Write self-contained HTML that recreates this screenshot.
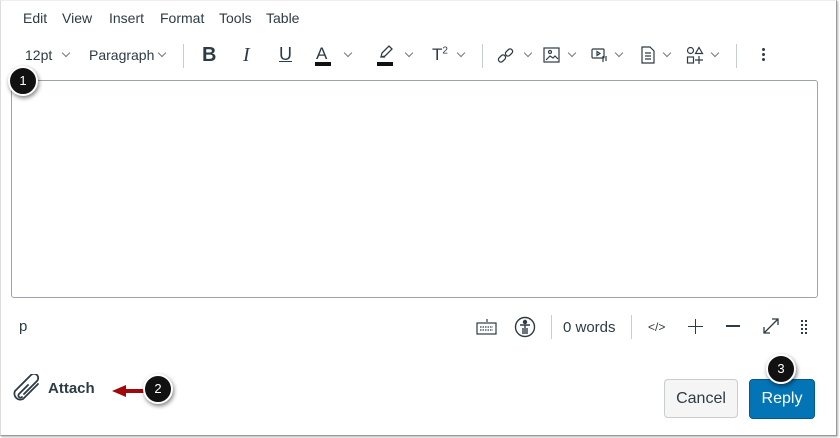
<!DOCTYPE html>
<html><head><style>
body{margin:0;width:840px;height:438px;background:#fff;font-family:"Liberation Sans",sans-serif;color:#2d3b45;position:relative;overflow:hidden}
.a{position:absolute}
.frame{left:0;top:0;width:835px;height:434px;border-right:1px solid #9a9a9a;border-bottom:1px solid #9a9a9a;border-left:1px solid #ddd;border-top:1px solid #eee;box-shadow:1px 1px 2px rgba(0,0,0,.3)}
.menu span{position:absolute;top:10px;font-size:14px;color:#2d3b45}
.tb{font-size:14px;top:47px}
.chev{position:absolute;width:5px;height:5px;border-right:1px solid #777;border-bottom:1px solid #777;transform:rotate(45deg)}
.sep{position:absolute;width:1px;background:#c7cdd1}
.badge{position:absolute;width:26px;height:26px;border-radius:50%;background:#111;color:#fff;font-size:13px;text-align:center;line-height:26px;border:2px solid #fff;box-shadow:1px 2px 4px rgba(0,0,0,.5)}
</style></head><body>
<div class="a frame"></div>
<div class="menu">
<span style="left:23px">Edit</span><span style="left:62px">View</span><span style="left:109px">Insert</span><span style="left:160px">Format</span><span style="left:219px">Tools</span><span style="left:266px">Table</span>
</div>
<div class="a tb" style="left:25px">12pt</div><div class="chev" style="left:63px;top:50px"></div>
<div class="a tb" style="left:89px">Paragraph</div><div class="chev" style="left:159px;top:50px"></div>
<div class="sep" style="left:183px;top:44px;height:24px"></div>
<div class="a" style="left:202px;top:44px;font-size:20px;font-weight:bold">B</div>
<div class="a" style="left:243px;top:44px;font-size:20px;font-style:italic;font-family:'Liberation Serif',serif">I</div>
<div class="a" style="left:279px;top:44px;font-size:18px;text-decoration:underline">U</div>
<div class="a" style="left:316px;top:44px;font-size:17px">A</div><div class="a" style="left:315px;top:62px;width:16px;height:4px;background:#111"></div><div class="chev" style="left:345px;top:50px"></div>
<svg class="a" style="left:378px;top:45px" width="16" height="14" viewBox="0 0 16 14" fill="none" stroke="#2d3b45" stroke-width="1.3"><path d="M3 12l1-4 7-7 3 3-7 7z M3 12h4"/></svg><div class="a" style="left:377px;top:62px;width:16px;height:4px;background:#111"></div><div class="chev" style="left:406px;top:50px"></div>
<div class="a" style="left:432px;top:45px;font-size:17px">T<sup style="font-size:10px">2</sup></div><div class="chev" style="left:458px;top:50px"></div>
<div class="sep" style="left:482px;top:44px;height:24px"></div>
<svg class="a" style="left:496px;top:46px" width="20" height="20" viewBox="0 0 20 20" fill="none" stroke="#2d3b45" stroke-width="1.3"><rect x="2" y="10" width="8" height="5" rx="2.5" transform="rotate(-45 6 12.5)"/><rect x="9" y="4" width="8" height="5" rx="2.5" transform="rotate(-45 13 6.5)"/></svg><div class="chev" style="left:525px;top:50px"></div>
<svg class="a" style="left:543px;top:47px" width="17" height="16" viewBox="0 0 17 16" fill="none" stroke="#2d3b45" stroke-width="1.2"><rect x="1" y="1" width="15" height="14"/><circle cx="7" cy="5" r="1.5"/><path d="M3 13l4-4 3 2 2-2 3 3"/></svg><div class="chev" style="left:569px;top:50px"></div>
<svg class="a" style="left:591px;top:47px" width="18" height="18" viewBox="0 0 18 18" fill="none" stroke="#2d3b45" stroke-width="1.2"><rect x="1" y="2" width="12" height="9" rx="1"/><path d="M6 4.5v4l3-2z"/><path d="M12 9v6M15 9v5"/></svg><div class="chev" style="left:616px;top:50px"></div>
<svg class="a" style="left:641px;top:46px" width="14" height="18" viewBox="0 0 14 18" fill="none" stroke="#2d3b45" stroke-width="1.2"><path d="M1 1h8l4 4v12H1z M4 7h6M4 10h6M4 13h6"/></svg><div class="chev" style="left:664px;top:50px"></div>
<svg class="a" style="left:686px;top:46px" width="18" height="19" viewBox="0 0 18 19" fill="none" stroke="#2d3b45" stroke-width="1.2"><circle cx="4.5" cy="4.5" r="3"/><path d="M13 1.5l3.5 6h-7z"/><rect x="1.5" y="11" width="6" height="6"/><path d="M13 10v8M9 14h8"/></svg><div class="chev" style="left:712px;top:50px"></div>
<div class="sep" style="left:736px;top:44px;height:24px"></div>
<div class="a" style="left:762px;top:48px;width:3px;height:3px;background:#2d3b45;border-radius:50%;box-shadow:0 5px 0 #2d3b45,0 10px 0 #2d3b45"></div>
<div class="a" style="left:11px;top:80px;width:805px;height:216px;border:1px solid #9da3a8;border-radius:3px"></div>
<div class="badge" style="left:8px;top:66px">1</div>
<div class="a" style="left:19px;top:318px;font-size:15px">p</div>
<svg class="a" style="left:476px;top:318px" width="21" height="17" viewBox="0 0 21 17" fill="none" stroke="#2d3b45" stroke-width="1.2"><path d="M11 1v3"/><rect x="1" y="5" width="19" height="11"/><path d="M4 9h13M4 12h13" stroke-dasharray="1.5 1"/></svg>
<svg class="a" style="left:514px;top:316px" width="22" height="22" viewBox="0 0 22 22" fill="none" stroke="#2d3b45" stroke-width="1.4"><circle cx="11" cy="11" r="9.5"/><circle cx="11" cy="6" r="1.5" fill="#2d3b45"/><path d="M6 9h10M11 9v9M9 12v6M13 12v6"/></svg>
<div class="sep" style="left:551px;top:315px;height:24px"></div>
<div class="a" style="left:563px;top:319px;font-size:15px">0 words</div>
<div class="sep" style="left:631px;top:315px;height:24px"></div>
<div class="a" style="left:648px;top:320px;font-size:12px">&lt;/&gt;</div>
<div class="a" style="left:688px;top:326px;width:15px;height:1px;background:#2d3b45"></div><div class="a" style="left:695px;top:319px;width:1px;height:15px;background:#2d3b45"></div>
<div class="a" style="left:726px;top:325px;width:14px;height:2px;background:#2d3b45"></div>
<svg class="a" style="left:762px;top:317px" width="18" height="18" viewBox="0 0 18 18" fill="none" stroke="#2d3b45" stroke-width="1.3"><path d="M2 16L16 2M10 2h6v6M2 10v6h6"/></svg>
<div class="a" style="left:801px;top:320px;width:2px;height:2px;background:#2d3b45;box-shadow:4px 0 #2d3b45,0 4px #2d3b45,4px 4px #2d3b45,0 8px #2d3b45,4px 8px #2d3b45,0 12px #2d3b45,4px 12px #2d3b45"></div>
<svg class="a" style="left:10px;top:374px" width="34" height="30" viewBox="0 0 34 30" fill="none" stroke="#2d3b45" stroke-width="1.8" stroke-linecap="round"><path d="M14 20L27 7a4 4 0 0 0-6-6L5 17a6 6 0 0 0 8 8l15-15M18 11l-9 9a2 2 0 0 0 3 3"/></svg>
<div class="a" style="left:48px;top:380px;font-size:15px;font-weight:bold">Attach</div>
<svg class="a" style="left:110px;top:383px" width="36" height="16"><path d="M2 8L16 2v4h20v4H16v4z" fill="#a0080b"/></svg>
<div class="badge" style="left:143px;top:374px">2</div>
<div class="a" style="left:664px;top:379px;width:72px;height:37px;background:#f5f5f5;border:1px solid #c7cdd1;border-radius:4px;font-size:16px;text-align:center;line-height:37px">Cancel</div>
<div class="a" style="left:749px;top:379px;width:64px;height:38px;background:#0374b5;border:1px solid #02598c;border-radius:4px;color:#fff;font-size:16px;text-align:center;line-height:38px">Reply</div>
<div class="badge" style="left:766px;top:354px">3</div>
</body></html>
